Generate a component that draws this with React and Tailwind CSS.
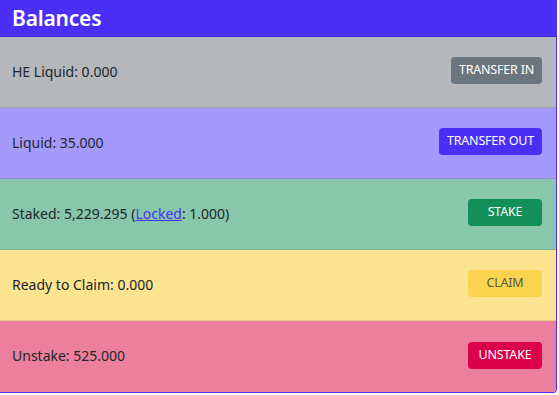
const rows = [
  {
    label: 'HE Liquid: 0.000',
    bg: 'bg-[#b5b7ba]',
    button: 'TRANSFER IN',
    btn: 'bg-[#6c757d] text-white',
  },
  {
    label: 'Liquid: 35.000',
    bg: 'bg-[#a59afc]',
    button: 'TRANSFER OUT',
    btn: 'bg-[#4b2ff7] text-white',
  },
  {
    label: 'staked',
    bg: 'bg-[#88c7ac]',
    button: 'STAKE',
    btn: 'bg-[#138f58] text-white',
  },
  {
    label: 'Ready to Claim: 0.000',
    bg: 'bg-[#fce491]',
    button: 'CLAIM',
    btn: 'bg-[#fbd44f] text-[#5b5646]',
  },
  {
    label: 'Unstake: 525.000',
    bg: 'bg-[#ec7f9e]',
    button: 'UNSTAKE',
    btn: 'bg-[#db0049] text-white',
  },
];

const App = () => {
  return (
    <div className="w-[559px] h-[395px] bg-white font-['Noto_Sans',sans-serif]">
      <div className="w-[557px] border-r border-b border-[#4b2ff7] rounded-br-[4px] overflow-hidden">
        {/* Header */}
        <div className="h-[37px] bg-[#4b2ff7] border-b border-black/10 flex items-center px-3">
          <h2 className="text-white text-[21px] font-semibold leading-none tracking-[-0.2px]">Balances</h2>
        </div>

        {rows.map((row, i) => (
          <div
            key={row.button}
            className={`${row.bg} h-[71px] flex items-center justify-between pl-3 pr-[14px] ${
              i < rows.length - 1 ? 'border-b border-black/10' : ''
            }`}
          >
            <span className="text-[14px] text-[#212529] mb-[2px]">
              {row.label === 'staked' ? (
                <>
                  Staked: 5,229.295 (
                  <a href="#" className="text-[#4b2ff7] underline">Locked</a>
                  : 1.000)
                </>
              ) : (
                row.label
              )}
            </span>
            <button
              className={`${row.btn} h-[27px] min-w-[74px] px-2 rounded-[4px] text-[12.5px] tracking-[-0.2px] leading-none mb-[3px]`}
            >
              {row.button}
            </button>
          </div>
        ))}
      </div>
    </div>
  );
};

export default App;
